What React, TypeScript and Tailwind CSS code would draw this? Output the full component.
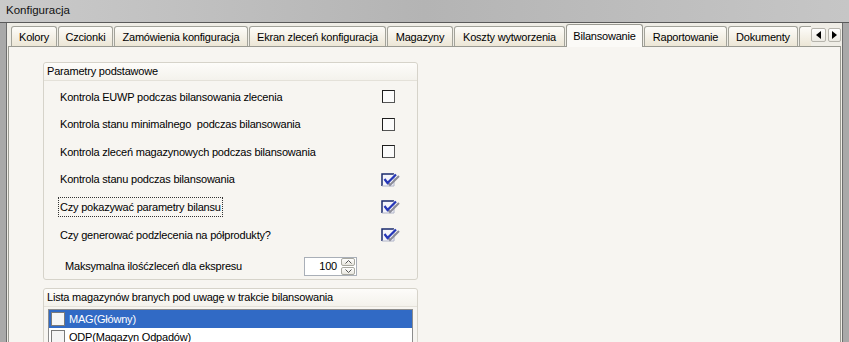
import React from "react";

const tabs = [
  { label: "Kolory", w: "w-[46px]" },
  { label: "Czcionki", w: "w-[55px]" },
  { label: "Zamówienia konfiguracja", w: "w-[134px]" },
  { label: "Ekran zleceń konfiguracja", w: "w-[137px]" },
  { label: "Magazyny", w: "w-[66px]" },
  { label: "Koszty wytworzenia", w: "w-[111px]" },
  { label: "Bilansowanie", w: "w-[77px]", active: true },
  { label: "Raportowanie", w: "w-[83px]" },
  { label: "Dokumenty", w: "w-[70px]" },
];

const params = [
  { label: "Kontrola EUWP podczas bilansowania zlecenia", checked: false },
  { label: "Kontrola stanu minimalnego  podczas bilansowania", checked: false },
  { label: "Kontrola zleceń magazynowych podczas bilansowania", checked: false },
  { label: "Kontrola stanu podczas bilansowania", checked: true },
  { label: "Czy pokazywać parametry bilansu", checked: true, focus: true },
  { label: "Czy generować podzlecenia na półprodukty?", checked: true },
];

function CheckBox({ checked }: { checked: boolean }) {
  if (!checked) {
    return (
      <span className="block h-[13px] w-[13px] ml-[1px] border border-t-[#1e1e1e] border-l-[#1e1e1e] border-r-[#555] border-b-[#555] bg-[#fbfbfb]" />
    );
  }
  return (
    <svg width="19" height="14" viewBox="0 0 19 14" className="block">
      <rect x="1" y="1" width="12" height="12" fill="#f4f4fa" />
      <path d="M1 13V1h12" fill="none" stroke="#1a2a6c" strokeWidth="1.5" />
      <path d="M13 1v12H1" fill="none" stroke="#b0b4c8" strokeWidth="1" />
      <polyline points="6,8.5 9,12 18,3" fill="none" stroke="#8c8c98" strokeWidth="2" />
      <polyline points="3.5,6 6.5,10 15,1.5" fill="none" stroke="#2637b8" strokeWidth="2.2" />
    </svg>
  );
}

function GroupHeader({ children }: { children: React.ReactNode }) {
  return (
    <div className="h-[18px] flex items-center pl-[3px] border-b border-[#e4e1d9] bg-gradient-to-b from-[#fdfcfa] to-[#f4f2ec] rounded-t-[3px]">
      {children}
    </div>
  );
}

export default function App() {
  return (
    <div className="w-[849px] h-[342px] overflow-hidden bg-[#a9a9a9] text-[11px] tracking-[-0.2px] text-black font-['Liberation_Sans',Arial,sans-serif] flex flex-col">
      {/* Title bar */}
      <div className="h-[23px] shrink-0 flex items-center pl-[6px] bg-gradient-to-r from-[#cacaca] via-[#b4b4b4] to-[#c6c6c6] border-b border-[#5a5a5a]">
        <span className="text-[11.5px] tracking-normal text-[#111]">Konfiguracja</span>
      </div>

      {/* Client */}
      <div className="flex-1 flex pl-[6px] pr-[6px]">
        <div className="flex-1 flex flex-col bg-[#efede6] border-l border-r border-[#6d6d6d]">
          {/* Tab strip */}
          <div className="h-[23px] shrink-0 flex items-end pl-[4px] gap-[1px] relative">
            {tabs.map((t) =>
              t.active ? (
                <div
                  key={t.label}
                  className={`${t.w} h-[23px] relative z-10 -mb-[1px] flex items-center justify-center rounded-t-[3px] border border-b-0 border-[#9a9a92] bg-[#fbfaf7]`}
                >
                  {t.label}
                </div>
              ) : (
                <div
                  key={t.label}
                  className={`${t.w} h-[20px] flex items-center justify-center rounded-t-[3px] border border-b-0 border-[#a3a39a] bg-gradient-to-b from-[#fdfcf9] to-[#ece6d6] pt-[1px]`}
                >
                  {t.label}
                </div>
              )
            )}
            <div className="w-[12px] h-[20px] rounded-tl-[3px] border border-b-0 border-r-0 border-[#a3a39a] bg-gradient-to-b from-[#fdfcf9] to-[#ece6d6]" />
            <div className="absolute right-[1px] top-[5px] flex gap-[2px]">
              <div className="w-[15px] h-[14px] border border-[#b6b4ac] rounded-[2px] bg-gradient-to-b from-white to-[#eceae3] flex items-center justify-center">
                <svg width="5" height="8" viewBox="0 0 5 8">
                  <polygon points="5,0 0,4 5,8" fill="#000" />
                </svg>
              </div>
              <div className="w-[13px] h-[14px] border border-[#b6b4ac] rounded-[2px] bg-gradient-to-b from-white to-[#eceae3] flex items-center justify-center">
                <svg width="5" height="8" viewBox="0 0 5 8">
                  <polygon points="0,0 5,4 0,8" fill="#000" />
                </svg>
              </div>
            </div>
          </div>

          {/* Tab panel */}
          <div className="flex-1 ml-[1px] mr-[1px] border border-[#9a9a92] border-b-0 bg-[#f7f5f1] pl-[34px] pt-[15px]">
            {/* Group 1 */}
            <div className="w-[375px] h-[218px] border border-[#d6d3ca] rounded-[3px] bg-[#f7f5f1]">
              <GroupHeader>Parametry podstawowe</GroupHeader>
              <div className="pt-[2px]">
                {params.map((p) => (
                  <div key={p.label} className="h-[27.6px] flex items-center pl-[16px] pr-[17px]">
                    <span className="flex-1">
                      <span
                        className={
                          p.focus
                            ? "inline-block whitespace-pre border border-dotted border-[#333] px-[1px] py-[1px] -ml-[2px]"
                            : "inline-block whitespace-pre py-[2px]"
                        }
                      >
                        {p.label}
                      </span>
                    </span>
                    <span className="w-[19px] flex justify-start">
                      <CheckBox checked={p.checked} />
                    </span>
                  </div>
                ))}
                <div className="h-[32px] flex items-center pl-[21px] pt-[4px]">
                  <span className="w-[239px]">Maksymalna ilośćzleceń dla ekspresu</span>
                  <div className="w-[53px] h-[19px] border border-[#a9afb8] bg-white flex items-center">
                    <span className="flex-1 text-right pr-[4px]">100</span>
                    <div className="w-[15px] h-[17px] flex flex-col gap-[1px] pr-[1px]">
                      <div className="flex-1 border border-[#a8a8a0] rounded-[2px] bg-gradient-to-b from-white to-[#e8e6de] flex items-center justify-center">
                        <svg width="7" height="4" viewBox="0 0 7 4">
                          <polyline points="0.5,3.5 3.5,0.5 6.5,3.5" fill="none" stroke="#555" strokeWidth="1" />
                        </svg>
                      </div>
                      <div className="flex-1 border border-[#a8a8a0] rounded-[2px] bg-gradient-to-b from-white to-[#e8e6de] flex items-center justify-center">
                        <svg width="7" height="4" viewBox="0 0 7 4">
                          <polyline points="0.5,0.5 3.5,3.5 6.5,0.5" fill="none" stroke="#555" strokeWidth="1" />
                        </svg>
                      </div>
                    </div>
                  </div>
                </div>
              </div>
            </div>

            {/* Group 2 */}
            <div className="mt-[8px] w-[375px] h-[80px] border border-[#d6d3ca] rounded-[3px] bg-[#f7f5f1]">
              <GroupHeader>Lista magazynów branych pod uwagę w trakcie bilansowania</GroupHeader>
              <div className="mt-[2px] mx-[4px] border border-[#8c8c8c] bg-white h-[60px]">
                <div className="h-[18px] flex items-center bg-[#316ac5] text-white pl-[2px] gap-[4px]">
                  <span className="w-[14px] h-[14px] border border-[#7a7a7a] bg-[#f5f5f5]" />
                  <span>MAG(Główny)</span>
                </div>
                <div className="h-[18px] flex items-center pl-[2px] gap-[4px]">
                  <span className="w-[14px] h-[14px] border border-[#7a7a7a] bg-[#f5f5f5]" />
                  <span>ODP(Magazyn Odpadów)</span>
                </div>
              </div>
            </div>
          </div>
        </div>
      </div>
    </div>
  );
}
